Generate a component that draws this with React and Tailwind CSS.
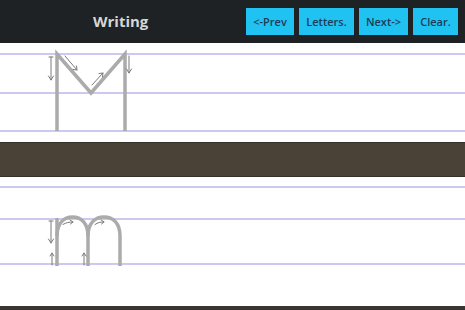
const buttons = [
  { label: '<-Prev', w: 'w-[48px]' },
  { label: 'Letters.', w: 'w-[55px]' },
  { label: 'Next->', w: 'w-[49px]' },
  { label: 'Clear.', w: 'w-[45px]' },
]

function Rule() {
  return <div className="h-[2px] bg-[#cdc8f0]" />
}

function Arrow({ d }) {
  return <path d={d} fill="none" stroke="#7a7a7a" strokeWidth="1" strokeLinecap="round" strokeLinejoin="round" />
}

function UpperM() {
  return (
    <svg className="absolute left-0 top-0" width="465" height="99" viewBox="0 43 465 99">
      <g fill="none" stroke="#ababab" strokeWidth="3.5" strokeLinejoin="miter">
        <path d="M57 131 L57 54 L91 93 L125 54 L125 131" />
      </g>
      <Arrow d="M51 57 L51 80 M48.5 76 L51 80 L53.5 76 M49 57 L53 57" />
      <Arrow d="M65 56 L77 70 M73 69.5 L77 70 L76.5 66" />
      <Arrow d="M92 85 L103 73 M99 73.5 L103 73 L102.5 77" />
      <Arrow d="M129 56 L129 73 M126.5 69 L129 73 L131.5 69" />
    </svg>
  )
}

function LowerM() {
  return (
    <svg className="absolute left-0 top-0" width="465" height="129" viewBox="0 177 465 129">
      <g fill="none" stroke="#ababab" strokeWidth="3.5">
        <path d="M57 218 L57 266" />
        <path d="M57 236 C57 223 64 217 72.5 217 C81 217 88 223 88 236 L88 266" />
        <path d="M88 236 C88 223 95 217 104 217 C113 217 120 223 120 236 L120 266" />
      </g>
      <Arrow d="M51 221 L51 243 M48.5 239 L51 243 L53.5 239 M49 221 L53 221" />
      <Arrow d="M52 265 L52 253 M50 256 L52 253 L54 256" />
      <Arrow d="M84 265 L84 253 M82 256 L84 253 L86 256" />
      <Arrow d="M63 224.5 C66 222.5 69 222 73 222 M70 220 L73 222 L70.5 224" />
      <Arrow d="M95 224.5 C98 222.5 100 222 104 222 M101 220 L104 222 L101.5 224" />
    </svg>
  )
}

export default function App() {
  return (
    <div className="w-[465px] h-[310px] overflow-hidden bg-white flex flex-col" style={{ fontFamily: '"Open Sans", "Noto Sans", sans-serif' }}>
      <div className="h-[43px] shrink-0 bg-[#1e2224] flex items-center">
        <div className="pl-[93px] text-[15px] font-bold text-[#d6d6d6] leading-none">Writing</div>
        <div className="ml-auto mr-[7px] flex gap-[5px]">
          {buttons.map((b) => (
            <button key={b.label} className={`${b.w} h-[27px] bg-[#20c2f2] text-[#1d3c55] text-[11px] font-semibold leading-none`}>
              {b.label}
            </button>
          ))}
        </div>
      </div>

      <div className="relative h-[99px] shrink-0">
        <div className="pt-[10px] flex flex-col">
          <Rule />
          <div className="h-[36.5px]" />
          <Rule />
          <div className="h-[36.5px]" />
          <Rule />
        </div>
        <UpperM />
      </div>

      <div className="h-[35px] shrink-0 bg-[#4a4237] border-y border-[#35302a]" />

      <div className="relative h-[129px] shrink-0">
        <div className="pt-[9px] flex flex-col">
          <Rule />
          <div className="h-[30px]" />
          <Rule />
          <div className="h-[43px]" />
          <Rule />
        </div>
        <LowerM />
      </div>

      <div className="flex-1 bg-[#3a3530]" />
    </div>
  )
}
